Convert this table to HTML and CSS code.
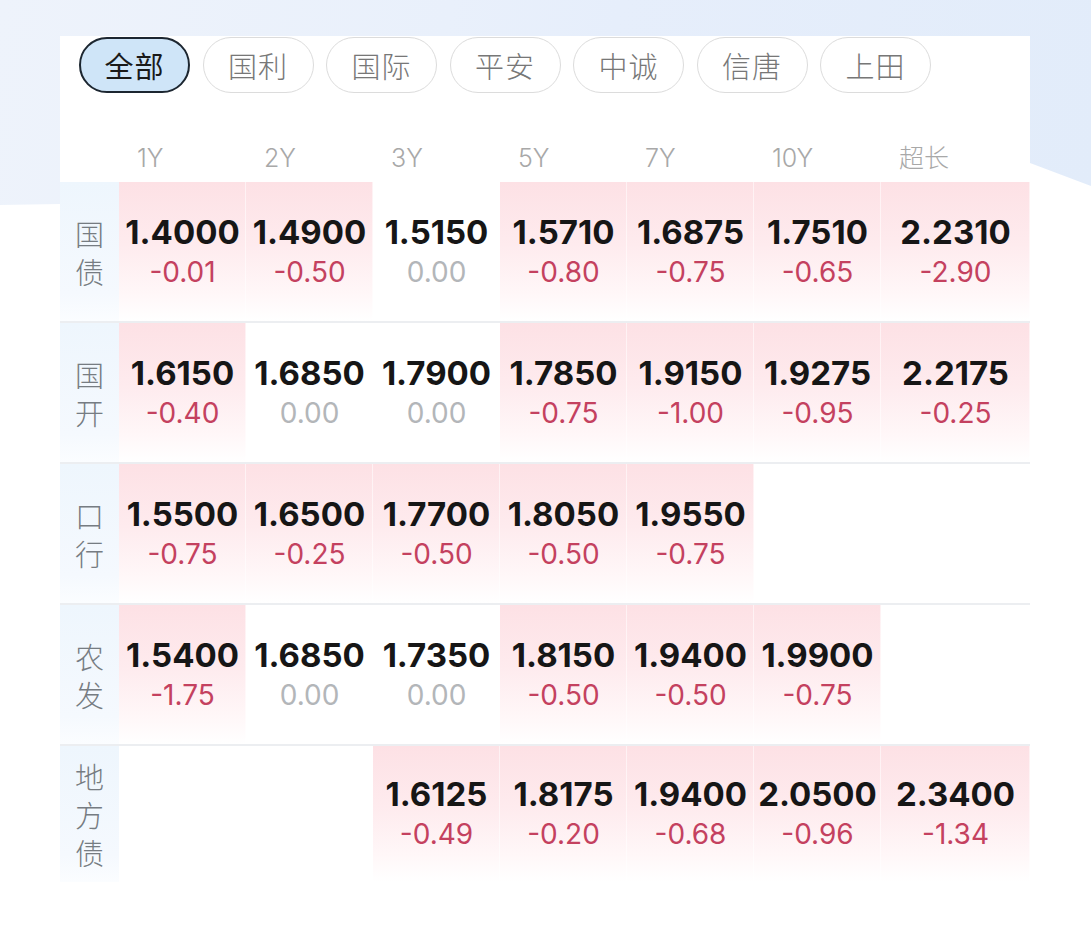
FILE: index.html
```html
<!DOCTYPE html>
<html lang="zh-CN">
<head>
<meta charset="utf-8">
<title>利率</title>
<link rel="stylesheet" href="styles.css">
</head>
<body>
<div class="backdrop"></div>
<div class="card">
  <div class="tabs">
    <div class="pill active">全部</div>
    <div class="pill">国利</div>
    <div class="pill">国际</div>
    <div class="pill">平安</div>
    <div class="pill">中诚</div>
    <div class="pill">信唐</div>
    <div class="pill">上田</div>
  </div>
  <div class="grid head">
    <div></div>
    <div class="h">1Y</div>
    <div class="h">2Y</div>
    <div class="h">3Y</div>
    <div class="h">5Y</div>
    <div class="h">7Y</div>
    <div class="h">10Y</div>
    <div class="h">超长</div>
  </div>

  <div class="grid row">
    <div class="label"><span>国</span><span>债</span></div>
    <div class="cell up"><b>1.4000</b><i>-0.01</i></div>
    <div class="cell up"><b>1.4900</b><i>-0.50</i></div>
    <div class="cell"><b>1.5150</b><i class="zero">0.00</i></div>
    <div class="cell up"><b>1.5710</b><i>-0.80</i></div>
    <div class="cell up"><b>1.6875</b><i>-0.75</i></div>
    <div class="cell up"><b>1.7510</b><i>-0.65</i></div>
    <div class="cell up"><b>2.2310</b><i>-2.90</i></div>
  </div>

  <div class="grid row">
    <div class="label"><span>国</span><span>开</span></div>
    <div class="cell up"><b>1.6150</b><i>-0.40</i></div>
    <div class="cell"><b>1.6850</b><i class="zero">0.00</i></div>
    <div class="cell"><b>1.7900</b><i class="zero">0.00</i></div>
    <div class="cell up"><b>1.7850</b><i>-0.75</i></div>
    <div class="cell up"><b>1.9150</b><i>-1.00</i></div>
    <div class="cell up"><b>1.9275</b><i>-0.95</i></div>
    <div class="cell up"><b>2.2175</b><i>-0.25</i></div>
  </div>

  <div class="grid row">
    <div class="label"><span>口</span><span>行</span></div>
    <div class="cell up"><b>1.5500</b><i>-0.75</i></div>
    <div class="cell up"><b>1.6500</b><i>-0.25</i></div>
    <div class="cell up"><b>1.7700</b><i>-0.50</i></div>
    <div class="cell up"><b>1.8050</b><i>-0.50</i></div>
    <div class="cell up"><b>1.9550</b><i>-0.75</i></div>
    <div class="cell"></div>
    <div class="cell"></div>
  </div>

  <div class="grid row">
    <div class="label"><span>农</span><span>发</span></div>
    <div class="cell up"><b>1.5400</b><i>-1.75</i></div>
    <div class="cell"><b>1.6850</b><i class="zero">0.00</i></div>
    <div class="cell"><b>1.7350</b><i class="zero">0.00</i></div>
    <div class="cell up"><b>1.8150</b><i>-0.50</i></div>
    <div class="cell up"><b>1.9400</b><i>-0.50</i></div>
    <div class="cell up"><b>1.9900</b><i>-0.75</i></div>
    <div class="cell"></div>
  </div>

  <div class="grid row last">
    <div class="label"><span>地</span><span>方</span><span>债</span></div>
    <div class="cell"></div>
    <div class="cell"></div>
    <div class="cell up"><b>1.6125</b><i>-0.49</i></div>
    <div class="cell up"><b>1.8175</b><i>-0.20</i></div>
    <div class="cell up"><b>1.9400</b><i>-0.68</i></div>
    <div class="cell up"><b>2.0500</b><i>-0.96</i></div>
    <div class="cell up"><b>2.3400</b><i>-1.34</i></div>
  </div>
</div>
</body>
</html>
```

FILE: styles.css
```css
html, body {
  margin: 0;
  padding: 0;
  background: #ffffff;
  font-family: "Inter", "Noto Sans CJK SC", sans-serif;
}

body {
  position: relative;
  width: 1091px;
  height: 946px;
  overflow: hidden;
}

.backdrop {
  position: absolute;
  left: 0;
  top: 0;
  width: 1091px;
  height: 210px;
  background: linear-gradient(100deg, #eef3fb 0%, #e9f0fb 40%, #e6eefb 55%, #e2ecfa 100%);
  clip-path: polygon(0 0, 100% 0, 100% 186px, 1030px 163px, 1030px 170px, 60px 204px, 0 205px);
}

.card {
  position: relative;
  margin: 36px 0 0 60px;
  width: 970px;
  background: #ffffff;
  padding-bottom: 6px;
}

.tabs {
  display: flex;
  gap: 12.5px;
  padding: 1px 0 0 19px;
}

.pill {
  box-sizing: border-box;
  width: 111px;
  height: 56px;
  border: 1.5px solid #dcdcdc;
  border-radius: 28px;
  display: flex;
  align-items: center;
  justify-content: center;
  font-family: "Noto Sans CJK SC", sans-serif;
  font-size: 29px;
  font-weight: 300;
  color: #777777;
  letter-spacing: 1px;
}

.pill.active {
  background: #cfe5f8;
  border: 2px solid #1c2630;
  color: #1a1a1a;
  font-weight: 400;
}

.grid {
  display: grid;
  grid-template-columns: 59px repeat(6, 127px) 149px;
}

.head {
  height: 89px;
}

.h {
  padding: 48px 0 0 18px;
  line-height: 34px;
  font-size: 25px;
  font-weight: 300;
  color: #a8a8a8;
  font-family: "Inter", "Noto Sans CJK SC", sans-serif;
}

.row {
  height: 139px;
  border-bottom: 2px solid #eceef1;
}

.row.last {
  height: 136px;
  border-bottom: none;
}

.label {
  display: flex;
  flex-direction: column;
  align-items: center;
  justify-content: center;
  background: linear-gradient(180deg, #eef6fd 0%, #f5f9fe 80%, #fbfdff 100%);
  font-family: "Noto Sans CJK SC", sans-serif;
  font-size: 29px;
  font-weight: 300;
  line-height: 38px;
  color: #767c82;
}

.cell {
  display: flex;
  flex-direction: column;
  align-items: center;
  justify-content: center;
}

.cell.up {
  background: linear-gradient(180deg, #fde1e5 0%, #feebee 45%, #fff7f8 80%, #ffffff 100%);
  box-shadow: inset -1px 0 0 rgba(255, 255, 255, 0.55);
}

.cell b {
  font-weight: 700;
  font-size: 33px;
  line-height: 40px;
  color: #161616;
}

.cell i {
  font-style: normal;
  font-size: 28px;
  line-height: 40px;
  color: #c4415f;
}

.cell i.zero {
  color: #b3b6b9;
}
```
